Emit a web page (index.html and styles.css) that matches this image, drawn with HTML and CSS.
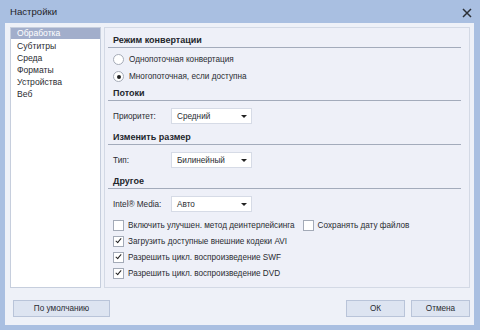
FILE: index.html
```html
<!DOCTYPE html>
<html lang="ru">
<head>
    <meta charset="UTF-8">
    <title>Настройки</title>
    <link rel="stylesheet" href="styles.css">
</head>
<body>
    <div class="window">
        <div class="titlebar">
            <span class="title">Настройки</span>
            <svg class="close" width="10" height="10" viewBox="0 0 10 10">
                <path d="M1 1 L9 9 M9 1 L1 9" stroke="#2b2f36" stroke-width="1.5" fill="none"/>
            </svg>
        </div>
        <div class="content">
            <div class="main">
                <ul class="nav">
                    <li class="active">Обработка</li>
                    <li>Субтитры</li>
                    <li>Среда</li>
                    <li>Форматы</li>
                    <li>Устройства</li>
                    <li>Веб</li>
                </ul>
                <div class="panel">
                    <div class="section-title">Режим конвертации</div>
                    <div class="section radios">
                        <div class="row"><span class="radio"></span>Однопоточная конвертация</div>
                        <div class="row"><span class="radio checked"></span>Многопоточная, если доступна</div>
                    </div>

                    <div class="section-title">Потоки</div>
                    <div class="section">
                        <div class="field">
                            <span class="label">Приоритет:</span>
                            <span class="select">Средний<span class="arrow"></span></span>
                        </div>
                    </div>

                    <div class="section-title">Изменить размер</div>
                    <div class="section">
                        <div class="field">
                            <span class="label">Тип:</span>
                            <span class="select">Билинейный<span class="arrow"></span></span>
                        </div>
                    </div>

                    <div class="section-title">Другое</div>
                    <div class="section">
                        <div class="field">
                            <span class="label">Intel® Media:</span>
                            <span class="select">Авто<span class="arrow"></span></span>
                        </div>
                        <div class="checks">
                            <div class="row">
                                <span class="check"></span>Включить улучшен. метод деинтерлейсинга
                                <span class="check second"></span>Сохранять дату файлов
                            </div>
                            <div class="row"><span class="check checked"></span>Загрузить доступные внешние кодеки AVI</div>
                            <div class="row"><span class="check checked"></span>Разрешить цикл. воспроизведение SWF</div>
                            <div class="row"><span class="check checked"></span>Разрешить цикл. воспроизведение DVD</div>
                        </div>
                    </div>
                </div>
            </div>
            <div class="footer">
                <button class="btn btn-default">По умолчанию</button>
                <div class="footer-right">
                    <button class="btn btn-small">ОК</button>
                    <button class="btn btn-small">Отмена</button>
                </div>
            </div>
        </div>
    </div>
</body>
</html>
```

FILE: styles.css
```css
body {
    margin: 0;
    font-family: 'Liberation Sans', Arial, sans-serif;
    font-size: 8.2px;
    color: #2a2c31;
    background: #a9bfe1;
}
.window {
    width: 480px;
    height: 330px;
    display: flex;
    flex-direction: column;
    background: #a9bfe1;
}
.titlebar {
    height: 23px;
    display: flex;
    align-items: center;
    justify-content: space-between;
    padding: 0 8px 0 10px;
}
.title {
    font-size: 9.6px;
    color: #1f2329;
}
.close {
    margin-top: 2px;
}
.content {
    flex: 1;
    margin: 0 6px 5px 5px;
    padding: 4px 4px 0 5px;
    background: #eef1f8;
    display: flex;
    flex-direction: column;
}
.main {
    display: flex;
    gap: 3px;
    height: 261px;
}
.nav {
    width: 89px;
    margin: 0;
    padding: 0;
    list-style: none;
    background: #fff;
    border: 1px solid #c6cedd;
    font-size: 8.6px;
}
.nav li {
    height: 12px;
    line-height: 12px;
    padding-left: 6px;
}
.nav li.active {
    background: #a2aecb;
    color: #fff;
    height: 11px;
    line-height: 11px;
    margin-bottom: 1px;
}
.panel {
    flex: 1;
    border: 1px solid #d3d9e5;
    background: #eef0f8;
    padding-top: 6px;
}
.section-title {
    font-weight: bold;
    font-size: 9px;
    height: 13px;
    line-height: 13px;
    margin: 0 8px 0 3px;
    padding-left: 5px;
    border-bottom: 1px solid #a3abbb;
    color: #23262c;
}
.section {
    padding: 7px 0 7px 8px;
}
.radios {
    padding-top: 3px;
    padding-bottom: 2px;
}
.row {
    height: 17px;
    display: flex;
    align-items: center;
}
.radio {
    width: 9px;
    height: 9px;
    border: 1px solid #a5abb7;
    border-radius: 50%;
    background: #fff;
    margin: 0 5px 0 0;
    display: flex;
    align-items: center;
    justify-content: center;
}
.radio.checked::after {
    content: '';
    width: 4px;
    height: 4px;
    border-radius: 50%;
    background: #222;
}
.field {
    display: flex;
    align-items: center;
    height: 16px;
}
.label {
    width: 58px;
}
.select {
    width: 74px;
    height: 14px;
    border: 1px solid #d6dbe6;
    background: #fff;
    padding-left: 5px;
    display: flex;
    align-items: center;
    justify-content: space-between;
}
.arrow {
    width: 0;
    height: 0;
    border-left: 3px solid transparent;
    border-right: 3px solid transparent;
    border-top: 3px solid #222;
    margin-right: 4px;
}
.checks {
    margin-top: 5px;
}
.checks .row {
    height: 16px;
}
.check {
    width: 9px;
    height: 9px;
    border: 1px solid #a3aab7;
    background: #fff;
    margin-right: 4px;
    position: relative;
}
.check.second {
    margin-left: 8px;
}
.check.checked::after {
    content: '';
    position: absolute;
    left: 3px;
    top: 0px;
    width: 2px;
    height: 5px;
    border: solid #222;
    border-width: 0 1.5px 1.5px 0;
    transform: rotate(40deg);
}
.footer {
    display: flex;
    justify-content: space-between;
    margin-top: 12px;
}
.footer-right {
    display: flex;
    gap: 6px;
}
.btn {
    font-family: 'Liberation Sans', Arial, sans-serif;
    font-size: 8.2px;
    color: #2a2c31;
    height: 17px;
    padding: 0;
    background: #dde4f1;
    border: 1px solid #b9c4d9;
    border-radius: 0;
}
.btn-default {
    width: 97px;
    margin-left: 3px;
}
.btn-small {
    width: 59px;
}
```
